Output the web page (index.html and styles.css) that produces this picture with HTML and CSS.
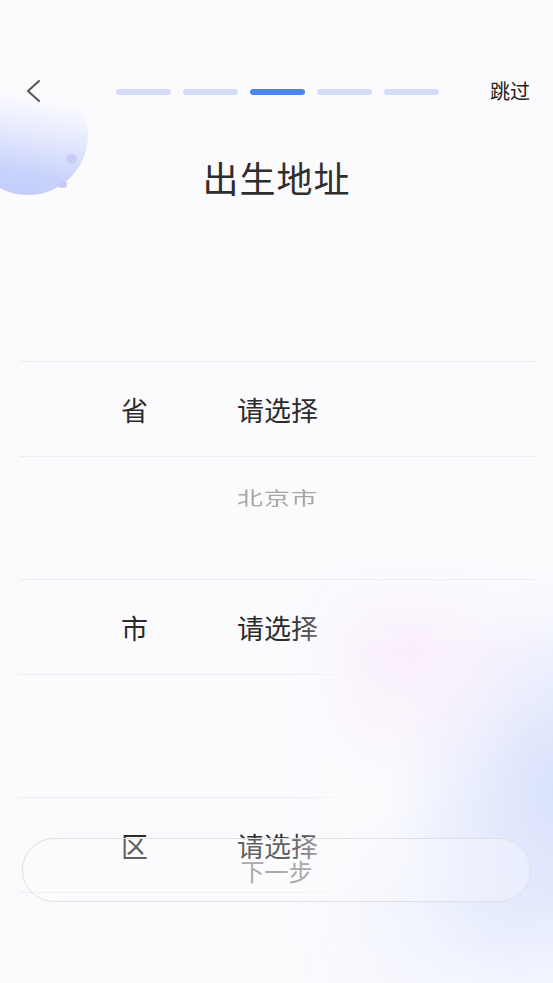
FILE: index.html
```html
<!DOCTYPE html>
<html lang="zh-CN">
<head>
<meta charset="utf-8">
<title>出生地址</title>
<link rel="stylesheet" href="styles.css">
</head>
<body>
<div class="page">
  <div class="blob-tl">
    <span class="dot dot-a"></span>
    <span class="dot dot-b"></span>
  </div>

  <header class="topbar">
    <button class="back" aria-label="返回">
      <svg width="20" height="24" viewBox="0 0 20 24"><path d="M15 2 L4 12 L15 22" fill="none" stroke="#555" stroke-width="2" stroke-linecap="round" stroke-linejoin="round"/></svg>
    </button>
    <div class="steps">
      <span class="step"></span>
      <span class="step"></span>
      <span class="step active"></span>
      <span class="step"></span>
      <span class="step"></span>
    </div>
    <a class="skip">跳过</a>
  </header>

  <h1 class="title">出生地址</h1>

  <section class="form">
    <div class="row">
      <span class="label">省</span>
      <span class="value">请选择</span>
    </div>
    <div class="options">
      <span class="option">北京市</span>
    </div>
    <div class="row">
      <span class="label">市</span>
      <span class="value">请选择</span>
    </div>
    <div class="options"></div>
    <div class="row">
      <span class="label">区</span>
      <span class="value">请选择</span>
    </div>
  </section>

  <div class="blob-br"></div>

  <button class="next">下一步</button>
</div>
</body>
</html>
```

FILE: styles.css
```css
* { box-sizing: border-box; }
html, body { margin: 0; padding: 0; }
body {
  font-family: "Noto Sans CJK SC", "Noto Sans", sans-serif;
  background: #fbfbfe;
}
.page {
  position: relative;
  width: 553px;
  height: 983px;
  overflow: hidden;
  background: #fbfbfe;
}
.blob-tl {
  position: absolute;
  left: -32px;
  top: 75px;
  width: 120px;
  height: 120px;
  border-radius: 50%;
  background: linear-gradient(190deg, rgba(255,255,255,0) 22%, #e6eafd 48%, #c8d2fb 78%, #c0ccfb 100%);
}
.dot {
  position: absolute;
  border-radius: 50%;
  background: #c9cdf5;
}
.dot-a { left: 98px; top: 79px; width: 11px; height: 10px; }
.dot-b { left: 90px; top: 106px; width: 9px; height: 7px; background: #c5cbf5; }

.topbar {
  position: relative;
  display: grid;
  grid-template-columns: 1fr auto 1fr;
  align-items: center;
  height: 40px;
  margin-top: 71px;
  padding: 0 23px 0 24px;
}
.back {
  justify-self: start;
  border: 0;
  background: none;
  padding: 0;
  width: 20px;
  height: 24px;
  display: flex;
}
.steps {
  display: flex;
  gap: 12px;
  padding-top: 2px;
}
.step {
  width: 55px;
  height: 6px;
  border-radius: 3px;
  background: #d4dcf8;
}
.step.active { background: #4d86ea; }
.skip {
  justify-self: end;
  font-size: 20px;
  color: #222;
  line-height: 28px;
}
.title {
  position: relative;
  margin: 41px 0 0;
  text-align: center;
  font-size: 36px;
  line-height: 50px;
  font-weight: 400;
  color: #2e2e2e;
  letter-spacing: 1px;
}
.form {
  margin: 159px 16px 0 19px;
}
.row {
  display: flex;
  align-items: center;
  height: 96px;
  border-top: 1px solid #ececf1;
  border-bottom: 1px solid #ececf1;
  font-size: 27px;
  color: #2b2b2b;
}
.label {
  width: 28px;
  margin-left: 102px;
}
.value {
  margin-left: 88px;
}
.options {
  height: 122px;
  padding: 20px 0 0 218px;
}
.option {
  display: inline-block;
  font-size: 26px;
  line-height: 40px;
  color: #a6a6a6;
  letter-spacing: 1px;
  transform: scaleY(0.7);
}
.blob-br {
  position: absolute;
  left: 290px;
  top: 520px;
  width: 263px;
  height: 463px;
  background:
    radial-gradient(ellipse 150px 150px at 120px 120px, rgba(249,238,251,1), rgba(249,238,251,0) 100%),
    radial-gradient(ellipse 170px 220px at 270px 270px, rgba(216,225,252,1), rgba(216,225,252,0) 100%),
    radial-gradient(ellipse 200px 160px at 210px 420px, rgba(232,237,253,1), rgba(232,237,253,0) 100%),
    #fbfbfe;
  -webkit-mask-image: linear-gradient(to right, transparent 0, #000 70px), linear-gradient(to bottom, transparent 40px, #000 130px, #000 380px, rgba(0,0,0,0.5) 463px);
  -webkit-mask-composite: source-in;
  mask-image: linear-gradient(to right, transparent 0, #000 70px), linear-gradient(to bottom, transparent 40px, #000 130px, #000 380px, rgba(0,0,0,0.5) 463px);
  mask-composite: intersect;
  pointer-events: none;
}
.next {
  position: absolute;
  left: 22px;
  top: 838px;
  width: 509px;
  height: 64px;
  border-radius: 32px;
  border: 1.5px solid #e0e0e4;
  background: rgba(255,255,255,0.25);
  font-family: "Noto Sans CJK SC", "Noto Sans", sans-serif;
  font-size: 24px;
  color: #a9a9a9;
  letter-spacing: 0;
  padding: 0;
}
```
